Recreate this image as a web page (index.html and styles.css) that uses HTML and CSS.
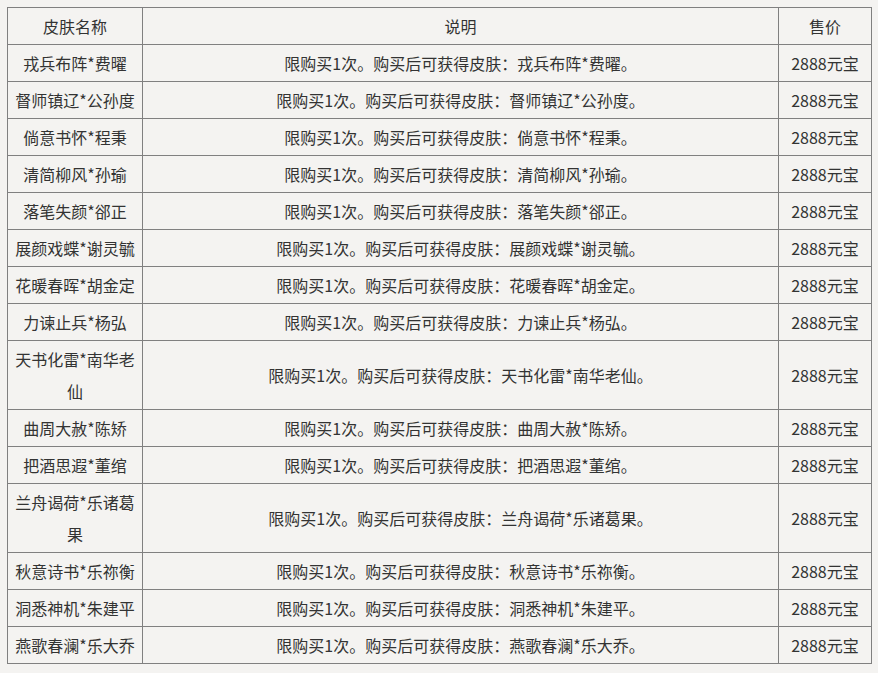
FILE: index.html
```html
<!DOCTYPE html>
<html lang="zh">
<head>
<meta charset="utf-8">
<link rel="stylesheet" href="styles.css">
</head>
<body>
<table class="skins">
<colgroup><col class="c1"><col class="c2"><col class="c3"></colgroup>
<tr><td>皮肤名称</td><td>说明</td><td>售价</td></tr>
<tr><td>戎兵布阵*费曜</td><td>限购买1次。购买后可获得皮肤：戎兵布阵*费曜。</td><td>2888元宝</td></tr>
<tr><td>督师镇辽*公孙度</td><td>限购买1次。购买后可获得皮肤：督师镇辽*公孙度。</td><td>2888元宝</td></tr>
<tr><td>倘意书怀*程秉</td><td>限购买1次。购买后可获得皮肤：倘意书怀*程秉。</td><td>2888元宝</td></tr>
<tr><td>清简柳风*孙瑜</td><td>限购买1次。购买后可获得皮肤：清简柳风*孙瑜。</td><td>2888元宝</td></tr>
<tr><td>落笔失颜*郤正</td><td>限购买1次。购买后可获得皮肤：落笔失颜*郤正。</td><td>2888元宝</td></tr>
<tr><td>展颜戏蝶*谢灵毓</td><td>限购买1次。购买后可获得皮肤：展颜戏蝶*谢灵毓。</td><td>2888元宝</td></tr>
<tr><td>花暖春晖*胡金定</td><td>限购买1次。购买后可获得皮肤：花暖春晖*胡金定。</td><td>2888元宝</td></tr>
<tr><td>力谏止兵*杨弘</td><td>限购买1次。购买后可获得皮肤：力谏止兵*杨弘。</td><td>2888元宝</td></tr>
<tr><td>天书化雷*南华老仙</td><td>限购买1次。购买后可获得皮肤：天书化雷*南华老仙。</td><td>2888元宝</td></tr>
<tr><td>曲周大赦*陈矫</td><td>限购买1次。购买后可获得皮肤：曲周大赦*陈矫。</td><td>2888元宝</td></tr>
<tr><td>把酒思遐*董绾</td><td>限购买1次。购买后可获得皮肤：把酒思遐*董绾。</td><td>2888元宝</td></tr>
<tr><td>兰舟谒荷*乐诸葛果</td><td>限购买1次。购买后可获得皮肤：兰舟谒荷*乐诸葛果。</td><td>2888元宝</td></tr>
<tr><td>秋意诗书*乐祢衡</td><td>限购买1次。购买后可获得皮肤：秋意诗书*乐祢衡。</td><td>2888元宝</td></tr>
<tr><td>洞悉神机*朱建平</td><td>限购买1次。购买后可获得皮肤：洞悉神机*朱建平。</td><td>2888元宝</td></tr>
<tr><td>燕歌春澜*乐大乔</td><td>限购买1次。购买后可获得皮肤：燕歌春澜*乐大乔。</td><td>2888元宝</td></tr>
</table>
</body>
</html>
```
FILE: styles.css
```css
html, body {
  background: #f4f3f1;
}
body {
  margin: 0;
  padding: 7px;
  font-family: "Noto Sans CJK SC", "Noto Sans", sans-serif;
  font-size: 16px;
  color: #333333;
}
.skins {
  border-collapse: collapse;
  table-layout: fixed;
  width: 864px;
}
.c1 { width: 135px; }
.c2 { width: 636px; }
.c3 { width: 93px; }
.skins td {
  border: 1px solid #808080;
  padding: 2px 5px;
  line-height: 32px;
  text-align: center;
  vertical-align: middle;
  word-break: break-all;
}
```
